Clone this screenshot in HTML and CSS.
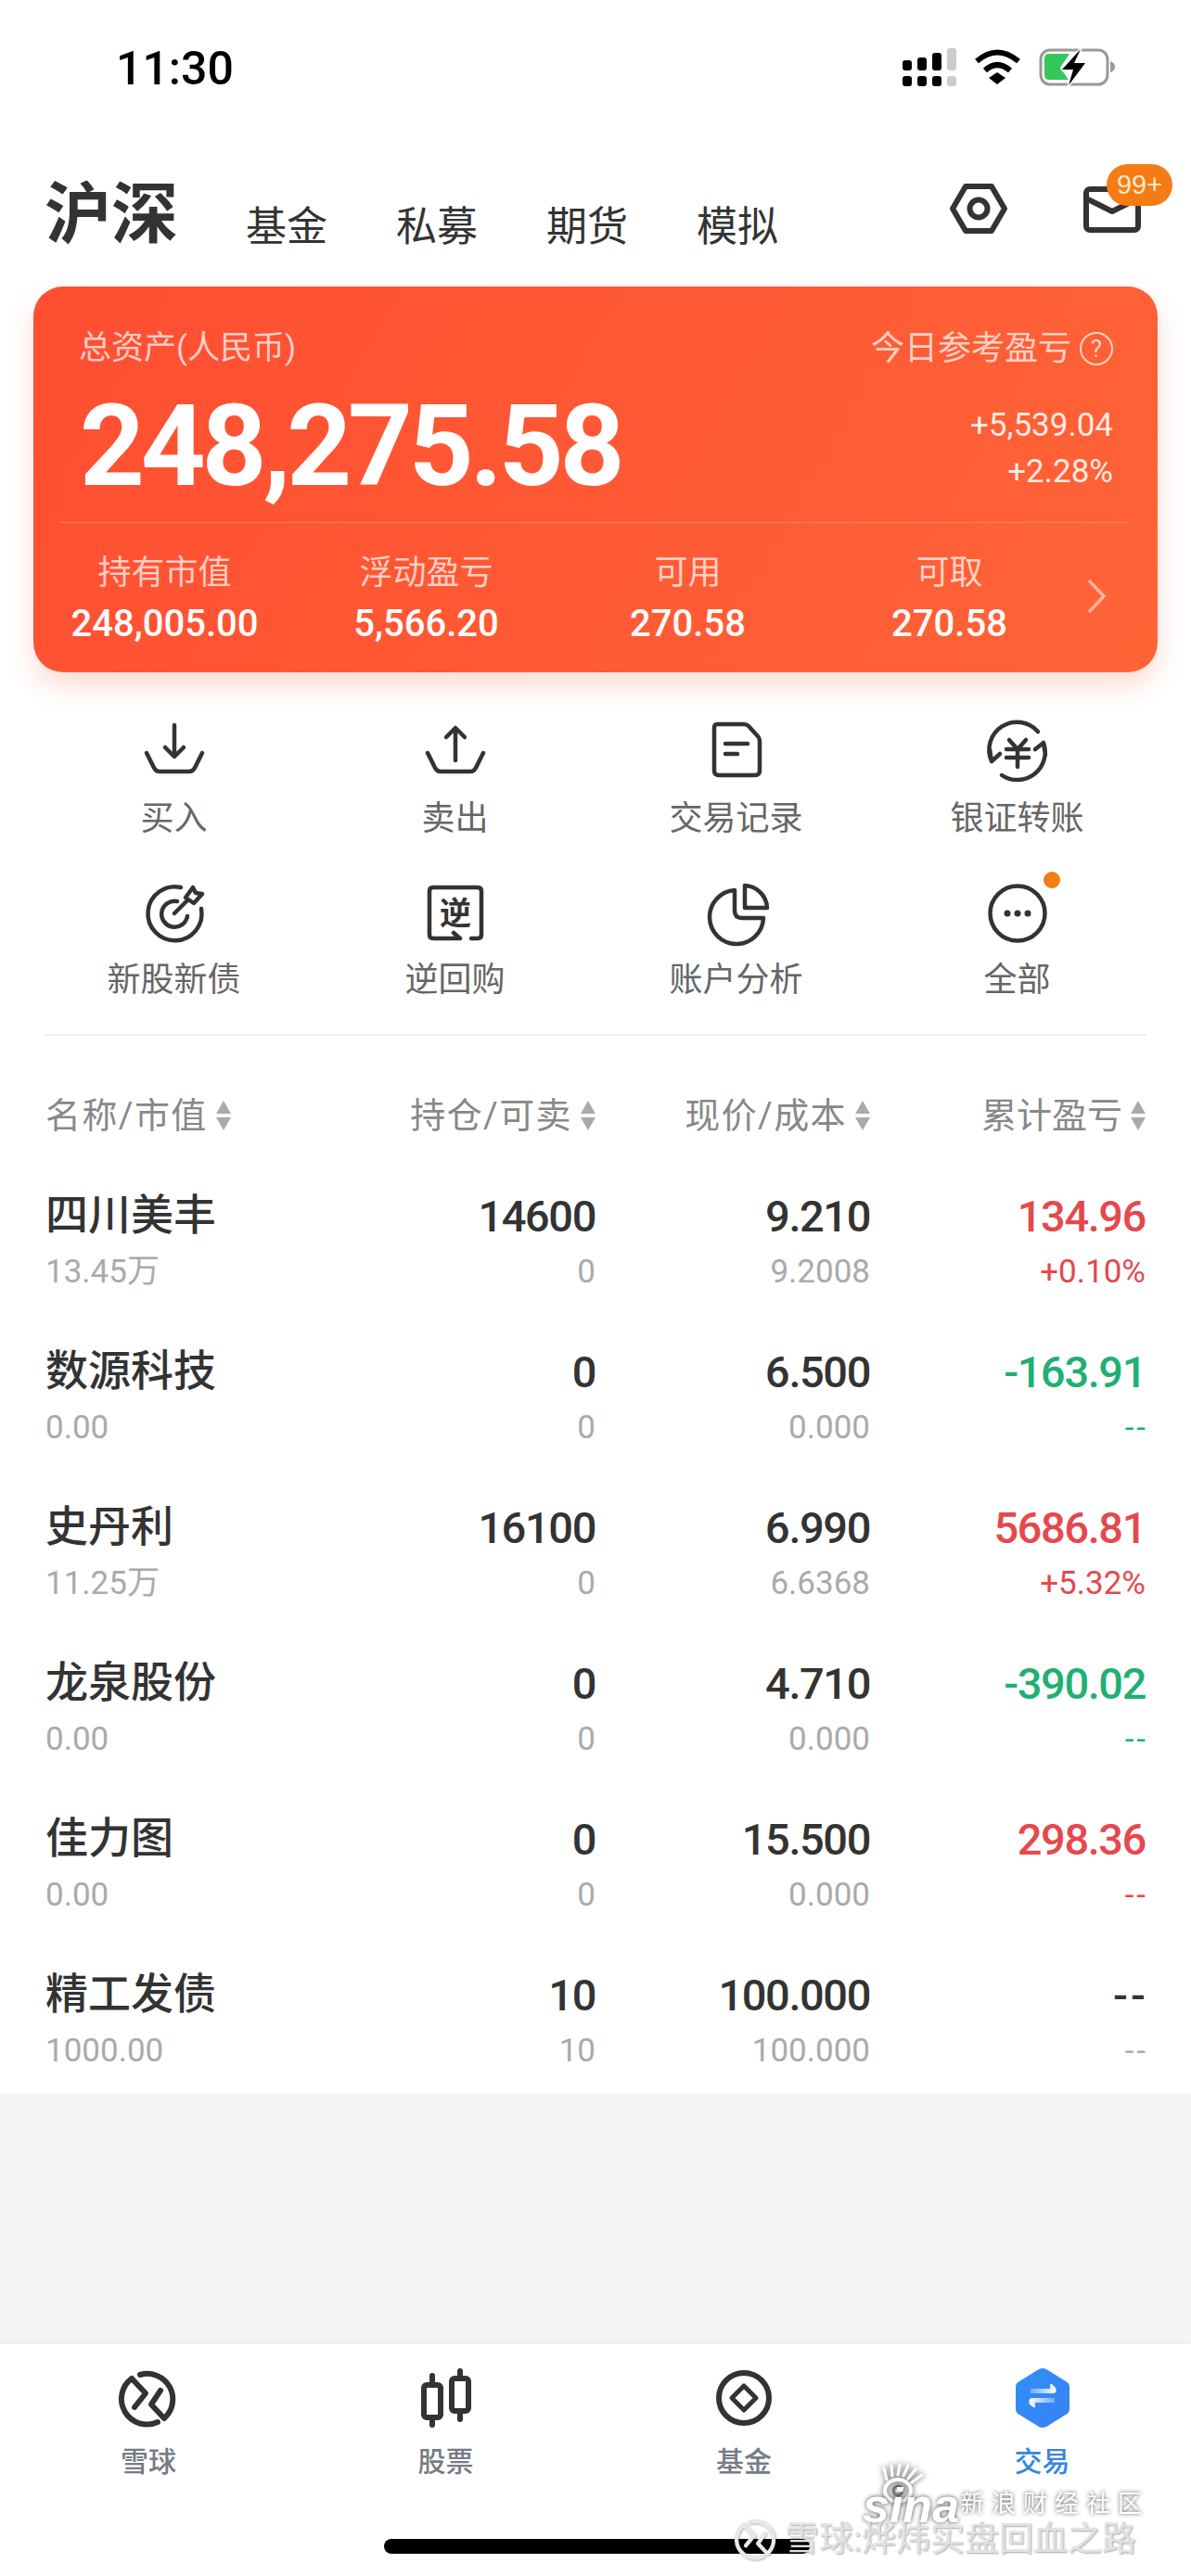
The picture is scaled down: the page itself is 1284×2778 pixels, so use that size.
FILE: index.html
```html
<!DOCTYPE html>
<html lang="zh-CN">
<head>
    <meta charset="UTF-8">
    <meta name="viewport" content="width=device-width, initial-scale=1.0">
    <title>交易</title>
    <link rel="stylesheet" href="styles.css">
</head>
<body>
<div class="page">
    <div class="status-bar">
        <span class="time">11:30</span>
        <svg class="status-icons" width="240" height="50" viewBox="0 0 240 50">
            <g transform="translate(-972 -48)">
                <rect x="973" y="65" width="10" height="11" rx="3"/>
                <rect x="989" y="62" width="10" height="14" rx="3"/>
                <rect x="1005" y="57" width="10" height="19" rx="3"/>
                <rect x="1021" y="52" width="10" height="24" rx="3" fill="#ccc"/>
                <rect x="973" y="82" width="10" height="11" rx="3"/>
                <rect x="989" y="82" width="10" height="11" rx="3"/>
                <rect x="1005" y="82" width="10" height="11" rx="3"/>
                <rect x="1021" y="82" width="10" height="11" rx="3" fill="#ccc"/>
                <path d="M1053 66 Q1075 47 1098 66" fill="none" stroke="#000" stroke-width="6"/>
                <path d="M1062 76 Q1075 64 1089 76" fill="none" stroke="#000" stroke-width="6"/>
                <path d="M1066 84 L1075 78 L1084 84 L1075 91 Z"/>
                <rect x="1122" y="54" width="72" height="37" rx="10" fill="none" stroke="#999" stroke-width="3"/>
                <path d="M1197 66 Q1202 68 1202 72 Q1202 76 1197 78 Z" fill="#999"/>
                <path d="M1131 58 H1153 L1143 73 L1152 86 H1131 Q1126 86 1126 81 V63 Q1126 58 1131 58 Z" fill="#34c759"/>
                <path d="M1165 53 L1145 75 H1157 L1152 92 L1170 68 H1158 Z" stroke="#fff" stroke-width="3" paint-order="stroke" stroke-linejoin="round"/>
            </g>
        </svg>
    </div>

    <div class="top-nav">
        <span class="market">沪深</span>
        <span class="nav-tab">基金</span>
        <span class="nav-tab">私募</span>
        <span class="nav-tab">期货</span>
        <span class="nav-tab">模拟</span>
        <div class="nav-icons">
            <svg class="icon-settings" width="64" height="56" viewBox="0 0 64 56" fill="none" stroke="#333" stroke-width="6" stroke-linejoin="round">
                <path d="M18 4 H46 L60 28 L46 52 H18 L4 28 Z"/>
                <circle cx="32" cy="28" r="9.5"/>
            </svg>
            <div class="mail">
                <svg width="62" height="50" viewBox="0 0 62 50" fill="none" stroke="#333" stroke-width="6" stroke-linejoin="round">
                    <rect x="3" y="3" width="56" height="44" rx="4"/>
                    <path d="M3 13 L31 27 L59 13"/>
                </svg>
                <span class="badge">99+</span>
            </div>
        </div>
    </div>

    <div class="asset-card">
        <div class="card-head">
            <span>总资产(人民币)</span>
            <span class="today">今日参考盈亏<i class="help">?</i></span>
        </div>
        <div class="card-main">
            <span class="total">248,275.58</span>
            <div class="today-values">
                <span>+5,539.04</span>
                <span>+2.28%</span>
            </div>
        </div>
        <div class="card-stats">
            <div class="stat"><span class="stat-label">持有市值</span><span class="stat-value">248,005.00</span></div>
            <div class="stat"><span class="stat-label">浮动盈亏</span><span class="stat-value">5,566.20</span></div>
            <div class="stat"><span class="stat-label">可用</span><span class="stat-value">270.58</span></div>
            <div class="stat"><span class="stat-label">可取</span><span class="stat-value">270.58</span></div>
            <svg class="chevron" width="24" height="38" viewBox="0 0 24 38" fill="none" stroke="#ffb29a" stroke-width="3.5"><path d="M4 2 L20 19 L4 36"/></svg>
        </div>
    </div>

    <div class="actions">
        <div class="action">
            <svg class="action-icon" width="72" height="72" viewBox="0 0 72 72">
                <path d="M36 7 V40 M26 31 L36 41 L46 31"/>
                <path d="M6 37 L14 53 Q16 57 20 57 H52 Q56 57 58 53 L66 37"/>
            </svg>
            <span>买入</span>
        </div>
        <div class="action">
            <svg class="action-icon" width="72" height="72" viewBox="0 0 72 72">
                <path d="M36 11 V45 M26 20 L36 10 L46 20"/>
                <path d="M6 37 L14 53 Q16 57 20 57 H52 Q56 57 58 53 L66 37"/>
            </svg>
            <span>卖出</span>
        </div>
        <div class="action">
            <svg class="action-icon" width="72" height="72" viewBox="0 0 72 72">
                <path d="M15 6 H44 Q47 6 49 8 L59 19 Q61 21 61 24 V56 Q61 61 56 61 H17 Q12 61 12 56 V10 Q12 6 15 6 Z"/>
                <path d="M24 27 H48 M24 38 H37"/>
            </svg>
            <span>交易记录</span>
        </div>
        <div class="action">
            <svg class="action-icon" width="72" height="72" viewBox="0 0 72 72">
                <path d="M8 46 A30 30 0 0 1 58 14 M8 46 L6 33 M8 46 L17 38"/>
                <path d="M64 26 A30 30 0 0 1 19 61 M64 26 L55 33 M64 26 L66 39"/>
                <path d="M27 23 L36 33 L45 23 M24 33 H48 M24 42 H48 M36 33 V52"/>
            </svg>
            <span>银证转账</span>
        </div>
        <div class="action">
            <svg class="action-icon" width="72" height="72" viewBox="0 0 72 72">
                <path d="M43 8 A29 29 0 1 0 65 31"/>
                <path d="M39 23 A14 14 0 1 0 50 39"/>
                <path d="M36 36 L50 22"/>
                <path d="M48 19 L56 8 L59 14 L66 15 L57 25 Z"/>
            </svg>
            <span>新股新债</span>
        </div>
        <div class="action">
            <svg class="action-icon" width="72" height="72" viewBox="0 0 72 72">
                <path d="M41 63 H12 Q8 63 8 59 V12 Q8 8 12 8 H60 Q64 8 64 12 V59 Q64 63 60 63 H53 M34 57 L41 63 L34 63"/>
                <text class="reverse-glyph" x="36" y="48" text-anchor="middle">逆</text>
            </svg>
            <span>逆回购</span>
        </div>
        <div class="action">
            <svg class="action-icon" width="72" height="72" viewBox="0 0 72 72">
                <path d="M34 11 A29 29 0 1 0 65 41 H42 Q34 41 34 33 Z"/>
                <path d="M45 6 A25 25 0 0 1 69 30 H45 Z"/>
            </svg>
            <span>账户分析</span>
        </div>
        <div class="action">
            <svg class="action-icon" width="72" height="72" viewBox="0 0 72 72">
                <circle cx="36" cy="36" r="29.5"/>
                <circle class="solid" cx="25" cy="36" r="3.5"/>
                <circle class="solid" cx="36" cy="36" r="3.5"/>
                <circle class="solid" cx="47" cy="36" r="3.5"/>
            </svg>
            <i class="new-dot"></i>
            <span>全部</span>
        </div>
    </div>

    <div class="holdings">
        <div class="table-head">
            <span class="head-cell head-name">名称/市值<i class="sort"></i></span>
            <span class="head-cell">持仓/可卖<i class="sort"></i></span>
            <span class="head-cell">现价/成本<i class="sort"></i></span>
            <span class="head-cell">累计盈亏<i class="sort"></i></span>
        </div>
        <div class="row">
            <div class="cell cell-name"><span class="name">四川美丰</span><span class="sub">13.45万</span></div>
            <div class="cell"><span class="num">14600</span><span class="sub">0</span></div>
            <div class="cell"><span class="num">9.210</span><span class="sub">9.2008</span></div>
            <div class="cell up"><span class="num">134.96</span><span class="sub">+0.10%</span></div>
        </div>
        <div class="row">
            <div class="cell cell-name"><span class="name">数源科技</span><span class="sub">0.00</span></div>
            <div class="cell"><span class="num">0</span><span class="sub">0</span></div>
            <div class="cell"><span class="num">6.500</span><span class="sub">0.000</span></div>
            <div class="cell down"><span class="num">-163.91</span><span class="sub dash">--</span></div>
        </div>
        <div class="row">
            <div class="cell cell-name"><span class="name">史丹利</span><span class="sub">11.25万</span></div>
            <div class="cell"><span class="num">16100</span><span class="sub">0</span></div>
            <div class="cell"><span class="num">6.990</span><span class="sub">6.6368</span></div>
            <div class="cell up"><span class="num">5686.81</span><span class="sub">+5.32%</span></div>
        </div>
        <div class="row">
            <div class="cell cell-name"><span class="name">龙泉股份</span><span class="sub">0.00</span></div>
            <div class="cell"><span class="num">0</span><span class="sub">0</span></div>
            <div class="cell"><span class="num">4.710</span><span class="sub">0.000</span></div>
            <div class="cell down"><span class="num">-390.02</span><span class="sub dash">--</span></div>
        </div>
        <div class="row">
            <div class="cell cell-name"><span class="name">佳力图</span><span class="sub">0.00</span></div>
            <div class="cell"><span class="num">0</span><span class="sub">0</span></div>
            <div class="cell"><span class="num">15.500</span><span class="sub">0.000</span></div>
            <div class="cell up"><span class="num">298.36</span><span class="sub dash">--</span></div>
        </div>
        <div class="row">
            <div class="cell cell-name"><span class="name">精工发债</span><span class="sub">1000.00</span></div>
            <div class="cell"><span class="num">10</span><span class="sub">10</span></div>
            <div class="cell"><span class="num">100.000</span><span class="sub">100.000</span></div>
            <div class="cell"><span class="num dash">--</span><span class="sub dash">--</span></div>
        </div>
    </div>

    <div class="filler"></div>

    <div class="tab-bar">
        <div class="tab">
            <svg width="72" height="72" viewBox="0 0 72 72" fill="none" stroke="#333" stroke-width="6" stroke-linecap="round" stroke-linejoin="round">
                <path d="M27 11 A27.5 27.5 0 0 1 53 58 L39 43 L49 28"/>
                <path d="M46 62 A27.5 27.5 0 0 1 18 15 L33 31 L21 46"/>
            </svg>
            <span>雪球</span>
        </div>
        <div class="tab">
            <svg width="72" height="72" viewBox="0 0 72 72" fill="none" stroke="#333" stroke-width="6" stroke-linecap="round">
                <path d="M21 12 V22 M21 57 V65"/>
                <rect x="12" y="22" width="18" height="35" rx="3"/>
                <path d="M51 7 V15 M51 50 V59"/>
                <rect x="42" y="15" width="18" height="35" rx="3"/>
            </svg>
            <span>股票</span>
        </div>
        <div class="tab">
            <svg width="72" height="72" viewBox="0 0 72 72" fill="none" stroke="#333" stroke-width="6" stroke-linejoin="round">
                <circle cx="36" cy="36" r="27"/>
                <path d="M36 23 L49 36 L36 49 L23 36 Z" stroke-width="5"/>
            </svg>
            <span>基金</span>
        </div>
        <div class="tab tab-active">
            <svg width="72" height="72" viewBox="0 0 72 72">
                <defs>
                    <linearGradient id="tradeBlue" x1="0" y1="0" x2="1" y2="1">
                        <stop offset="0" stop-color="#2f90f6"/>
                        <stop offset="1" stop-color="#3a80f5"/>
                    </linearGradient>
                    <linearGradient id="fadeRight" x1="0" y1="0" x2="1" y2="0">
                        <stop offset="0" stop-color="#fff" stop-opacity="0.3"/>
                        <stop offset="1" stop-color="#fff"/>
                    </linearGradient>
                    <linearGradient id="fadeLeft" x1="1" y1="0" x2="0" y2="0">
                        <stop offset="0" stop-color="#fff" stop-opacity="0.3"/>
                        <stop offset="1" stop-color="#fff"/>
                    </linearGradient>
                </defs>
                <path d="M36 4 Q38 4 40 5 L61 18 Q65 20 65 24 V48 Q65 52 61 54 L40 67 Q36 69 32 67 L11 54 Q7 52 7 48 V24 Q7 20 11 18 L32 5 Q34 4 36 4 Z" fill="url(#tradeBlue)"/>
                <path d="M23 26 H44 V22 Q44 20 46 21 L50 25 Q52 30 48 31 H23 Z" fill="url(#fadeRight)"/>
                <path d="M49 41 H28 V45 Q28 47 26 46 L22 43 Q20 37 24 36 H49 Z" fill="url(#fadeLeft)"/>
            </svg>
            <span>交易</span>
        </div>
    </div>

    <div class="home-bar"></div>

    <div class="watermark">
        <svg class="sina-eye" width="48" height="46" viewBox="0 0 48 46" fill="none" stroke="#fff" stroke-linecap="round">
            <ellipse cx="20" cy="30" rx="14" ry="12" stroke-width="4"/>
            <circle cx="20" cy="30" r="5" stroke="#777" stroke-width="2.5"/>
            <path d="M8 18 L5 6 M14 14 L13 3 M20 13 L22 2 M26 14 L31 3 M31 17 L39 7 M35 21 L46 13" stroke-width="3"/>
        </svg>
        <span class="sina-word">sina</span>
        <span class="sina-site">新浪财经社区</span>
        <svg class="xq-mark" width="52" height="52" viewBox="0 0 72 72" fill="none" stroke="#e8e8e8" stroke-width="6" stroke-linecap="round" stroke-linejoin="round">
            <path d="M27 11 A27.5 27.5 0 0 1 53 58 L39 43 L49 28"/>
            <path d="M46 62 A27.5 27.5 0 0 1 18 15 L33 31 L21 46"/>
        </svg>
        <span class="xq-text">雪球:烨炜实盘回血之路</span>
    </div>
</div>
</body>
</html>
```

FILE: styles.css
```css
* {
    box-sizing: border-box;
}
body {
    margin: 0;
    background: #fff;
    font-family: Roboto, "Noto Sans CJK SC", sans-serif;
    color: #333;
}
.page {
    position: relative;
    width: 1284px;
    height: 2778px;
    overflow: hidden;
    display: flex;
    flex-direction: column;
}

/* status bar */
.status-bar {
    height: 144px;
    padding: 50px 72px 0 125px;
    display: flex;
    justify-content: space-between;
    align-items: flex-start;
}
.time {
    font-size: 50px;
    font-weight: 500;
    line-height: 48px;
    color: #000;
}
.status-icons {
    display: block;
    margin-top: -2px;
}

/* market tabs */
.top-nav {
    height: 165px;
    padding: 0 18px 0 48px;
    display: flex;
    align-items: flex-start;
}
.market {
    font-size: 72px;
    font-weight: 700;
    line-height: 100px;
    margin-top: 38px;
    margin-right: 73px;
}
.nav-tab {
    font-size: 44px;
    line-height: 60px;
    margin-top: 71px;
    margin-right: 74px;
}
.nav-icons {
    margin-left: auto;
    display: flex;
    align-items: flex-start;
    padding-top: 53px;
}
.icon-settings {
    margin-right: 81px;
}
.mail {
    position: relative;
    margin-top: 4px;
    margin-right: 36px;
}
.mail svg,
.icon-settings {
    display: block;
}
.badge {
    position: absolute;
    left: 25px;
    top: -24px;
    width: 71px;
    height: 45px;
    border-radius: 23px;
    background: #f57c14;
    color: #ffe9c9;
    font-family: "Liberation Sans", sans-serif;
    font-size: 29px;
    line-height: 45px;
    text-align: center;
}

/* asset card */
.asset-card {
    margin: 0 36px;
    height: 416px;
    border-radius: 32px;
    background: linear-gradient(120deg, #ff4e32, #ff6437);
    box-shadow: 0 14px 28px rgba(255, 90, 60, 0.22);
    color: #fff;
    flex-shrink: 0;
}
.card-head {
    display: flex;
    justify-content: space-between;
    padding: 43px 48px 0 49px;
    font-size: 35px;
    line-height: 48px;
    color: rgba(255, 255, 255, 0.72);
}
.today {
    display: flex;
    align-items: center;
    font-size: 36px;
}
.help {
    width: 36px;
    height: 36px;
    margin-left: 9px;
    border: 2px solid rgba(255, 255, 255, 0.72);
    border-radius: 50%;
    font-style: normal;
    font-size: 26px;
    line-height: 32px;
    text-align: center;
}
.card-main {
    height: 163px;
    padding: 0 48px 0 50px;
    display: flex;
    justify-content: space-between;
    align-items: flex-start;
}
.total {
    font-size: 122px;
    font-weight: 700;
    line-height: 122px;
    letter-spacing: -4.2px;
    margin-top: 21px;
}
.today-values {
    display: flex;
    flex-direction: column;
    align-items: flex-end;
    font-size: 35px;
    line-height: 50px;
    margin-top: 34px;
    color: rgba(255, 255, 255, 0.88);
}
.card-stats {
    margin: 0 30px 0 28px;
    padding-top: 29px;
    border-top: 1px solid rgba(255, 255, 255, 0.22);
    display: grid;
    grid-template-columns: 282px 282px 282px 282px 1fr;
}
.stat {
    margin: 0 26px 0 -29px;
    display: flex;
    flex-direction: column;
    align-items: center;
    white-space: nowrap;
}
.stat-label {
    font-size: 36px;
    line-height: 50px;
    color: rgba(255, 255, 255, 0.72);
}
.stat-value {
    font-size: 40px;
    line-height: 52px;
    font-weight: 500;
    margin-top: 4px;
}
.chevron {
    align-self: center;
    margin-left: -22px;
    margin-top: -6px;
}

/* shortcut grid */
.actions {
    position: relative;
    margin-left: 36px;
    padding-top: 50px;
    height: 392px;
    display: grid;
    grid-template-columns: repeat(4, 303px);
    grid-auto-rows: 174px;
    flex-shrink: 0;
}
.actions::after {
    content: "";
    position: absolute;
    left: 12px;
    bottom: 0;
    width: 1188px;
    border-bottom: 2px solid #f0f0f0;
}
.action {
    position: relative;
    display: flex;
    flex-direction: column;
    align-items: center;
    font-size: 36px;
    line-height: 50px;
    color: #666;
}
.action-icon {
    display: block;
    margin-bottom: 11px;
    fill: none;
    stroke: #333;
    stroke-width: 4.5;
    stroke-linecap: round;
    stroke-linejoin: round;
}
.action-icon .solid {
    fill: #333;
    stroke: none;
}
.reverse-glyph {
    fill: #333;
    stroke: none;
    font-size: 34px;
    font-weight: 700;
}
.new-dot {
    position: absolute;
    left: 180px;
    top: -9px;
    width: 18px;
    height: 18px;
    border-radius: 50%;
    background: #f57c14;
}

/* holdings table */
.holdings {
    padding: 0 49px 0 49px;
    flex-shrink: 0;
}
.table-head,
.row {
    display: grid;
    grid-template-columns: 351px 242px 296px 297px;
}
.table-head {
    height: 139px;
    padding-top: 61px;
    font-size: 38px;
    line-height: 50px;
    color: #888;
    word-spacing: 0;
}
.head-cell {
    display: flex;
    justify-content: flex-end;
    align-items: center;
    height: 50px;
    letter-spacing: 1.4px;
}
.head-cell:last-child {
    letter-spacing: 0;
}
.head-name {
    justify-content: flex-start;
}
.sort {
    position: relative;
    width: 16px;
    height: 32px;
    margin-left: 9px;
}
.sort::before,
.sort::after {
    content: "";
    position: absolute;
    left: 0;
    border-left: 8px solid transparent;
    border-right: 8px solid transparent;
}
.sort::before {
    top: 0;
    border-bottom: 14px solid #aaa;
}
.sort::after {
    bottom: 0;
    border-top: 14px solid #aaa;
}
.row {
    height: 168px;
    padding-top: 24px;
}
.row:last-child {
    height: 162px;
}
.cell {
    display: flex;
    flex-direction: column;
    align-items: flex-end;
}
.cell-name {
    align-items: flex-start;
}
.name {
    font-size: 46px;
    line-height: 60px;
    font-weight: 500;
}
.num {
    margin-top: 2px;
    font-size: 47px;
    line-height: 60px;
    font-weight: 500;
    letter-spacing: -1.4px;
    font-variant-numeric: tabular-nums;
}
.sub {
    margin-top: 7px;
    font-size: 35px;
    line-height: 50px;
    color: #aaa;
}
.num + .sub {
    margin-top: 5px;
}
.dash {
    letter-spacing: 3px;
    margin-right: -3px;
}
.up .num,
.up .sub {
    color: #e5484d;
}
.down .num,
.down .sub {
    color: #1fb072;
}

.filler {
    flex: 1;
    background: #f5f5f5;
}

/* bottom tabs */
.tab-bar {
    height: 250px;
    padding-top: 22px;
    display: grid;
    grid-template-columns: 320px 321px 322px 321px;
    box-shadow: 0 -2px 6px rgba(0, 0, 0, 0.04);
    background: #fff;
}
.tab {
    display: flex;
    flex-direction: column;
    align-items: center;
    font-size: 30px;
    line-height: 42px;
    font-weight: 500;
    color: #777b85;
}
.tab svg {
    display: block;
    margin-bottom: 12px;
}
.tab-active {
    color: #3a84e0;
}
.home-bar {
    position: absolute;
    left: 414px;
    top: 2738px;
    width: 459px;
    height: 16px;
    border-radius: 8px;
    background: #000;
}

/* site watermark */
.watermark {
    position: absolute;
    left: 790px;
    top: 2650px;
    width: 480px;
    height: 120px;
}
.sina-eye {
    position: absolute;
    left: 158px;
    top: 6px;
    filter: drop-shadow(0 0 3px rgba(0, 0, 0, 0.7));
}
.sina-word {
    position: absolute;
    left: 140px;
    top: 37px;
    font-family: "Liberation Sans", sans-serif;
    font-size: 52px;
    line-height: 30px;
    font-weight: 700;
    font-style: italic;
    color: #fff;
    text-shadow: 0 0 5px rgba(0, 0, 0, 0.75);
}
.sina-site {
    position: absolute;
    left: 245px;
    top: 34px;
    font-size: 26px;
    line-height: 32px;
    letter-spacing: 8px;
    color: #fff;
    text-shadow: 0 0 4px rgba(0, 0, 0, 0.7);
}
.xq-mark {
    position: absolute;
    left: -1px;
    top: 62px;
    filter: drop-shadow(1px 1px 1px rgba(0, 0, 0, 0.3));
}
.xq-text {
    position: absolute;
    left: 56px;
    top: 70px;
    font-size: 37px;
    line-height: 38px;
    color: #e2e2e2;
    text-shadow: 1px 1px 2px rgba(0, 0, 0, 0.35);
    white-space: nowrap;
}
```
